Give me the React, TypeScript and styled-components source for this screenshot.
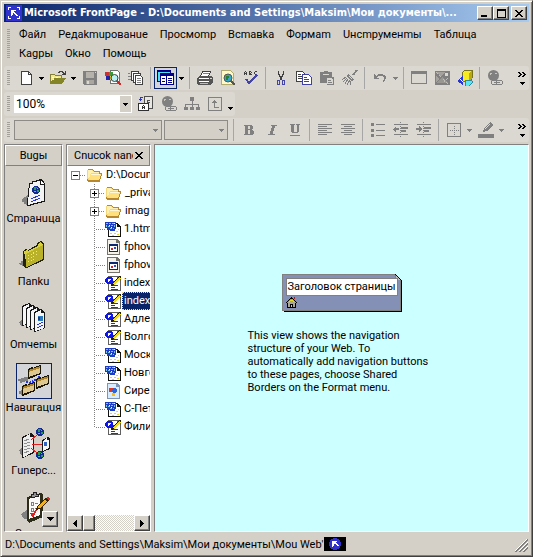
import React from "react";
import styled, { createGlobalStyle, css } from "styled-components";

const face = "#d4d0c8";
const band = "#dbd8d1";
const shade = "#808080";
const navy = "#0a246a";

const GlobalStyle = createGlobalStyle`
  * { box-sizing: border-box; }
  html, body { margin: 0; padding: 0; }
  body, button, select, input {
    font-family: Roboto, Tahoma, sans-serif;
    font-size: 11px;
    line-height: 13px;
    color: #000;
  }
  svg { display: block; flex: none; }
`;

/* ---------- window frame ---------- */

const Window = styled.div`
  display: flex;
  flex-direction: column;
  height: 100vh;
  padding: 3px;
  background: ${face};
  border: 1px solid;
  border-color: ${face} #404040 #404040 ${face};
  box-shadow: inset 1px 1px 0 #fff, inset -1px -1px 0 ${shade};
  overflow: hidden;
`;

const TitleBar = styled.header`
  display: flex;
  align-items: center;
  flex: none;
  height: 18px;
  padding: 0 2px 0 2px;
  gap: 2px;
  background: linear-gradient(to right, ${navy}, #a6caf0);
`;

const Title = styled.h1`
  flex: 1;
  min-width: 0;
  margin: 0;
  overflow: hidden;
  white-space: nowrap;
  text-overflow: ellipsis;
  font-family: "DejaVu Sans Condensed", sans-serif;
  font-size: 11px;
  line-height: 16px;
  font-weight: 700;
  color: #fff;
`;

const CaptionButtons = styled.div`
  display: flex;
  flex: none;
`;

const raised = css`
  background: ${face};
  border: 1px solid;
  border-color: #fff #404040 #404040 #fff;
  box-shadow: inset -1px -1px 0 ${shade};
`;

const CaptionButton = styled.button<{ $apart?: boolean }>`
  ${raised}
  display: flex;
  align-items: center;
  justify-content: center;
  width: 16px;
  height: 14px;
  padding: 0;
  margin-left: ${(p) => (p.$apart ? 2 : 0)}px;
`;

/* ---------- menus and toolbars ---------- */

const Grip = styled.span`
  flex: none;
  align-self: stretch;
  width: 3px;
  margin: 4px 4px 4px 3px;
  background: repeating-linear-gradient(#a3a09a 0 1px, transparent 1px 2px);
`;

const MenuBar = styled.nav`
  display: flex;
  flex: none;
  padding: 3px 0;
`;

const MenuItems = styled.div`
  display: flex;
  flex-wrap: wrap;
  flex: 1;
  max-width: 490px;
  padding-left: 5px;
  column-gap: 12px;
`;

const MenuButton = styled.button`
  height: 19px;
  padding: 0;
  border: 0;
  background: none;
  white-space: nowrap;
`;

const Toolbars = styled.div`
  display: flex;
  flex-direction: column;
  align-items: flex-start;
  flex: none;
  gap: 2px;
  margin-bottom: 2px;
`;

const Toolbar = styled.div<{ $short?: boolean }>`
  display: flex;
  align-items: center;
  width: ${(p) => (p.$short ? "auto" : "100%")};
  height: 24px;
  background: ${band};
  border-radius: 3px;
`;

const ToolButton = styled.button<{ $on?: boolean }>`
  display: flex;
  align-items: center;
  justify-content: center;
  flex: none;
  width: 23px;
  height: 22px;
  padding: 0;
  border: 1px solid ${(p) => (p.$on ? navy : "transparent")};
  background: ${(p) => (p.$on ? "#d4d5d8" : "none")};
`;

const CaretButton = styled.button<{ $low?: boolean }>`
  display: flex;
  align-items: ${(p) => (p.$low ? "flex-end" : "center")};
  justify-content: center;
  flex: none;
  width: 9px;
  height: 22px;
  padding: ${(p) => (p.$low ? "0 0 5px" : "0")};
  border: 0;
  background: none;
`;

const Separator = styled.span`
  flex: none;
  width: 1px;
  height: 22px;
  margin: 0 3px;
  background: #a6a6a6;
`;

const OverflowButton = styled.button`
  display: flex;
  flex-direction: column;
  align-items: center;
  gap: 5px;
  margin-left: auto;
  width: 14px;
  padding: 0;
  border: 0;
  background: none;
`;

const ComboBox = styled.label<{ $width: number; $off?: boolean }>`
  display: grid;
  align-items: center;
  flex: none;
  width: ${(p) => p.$width}px;
  height: ${(p) => (p.$off ? 20 : 18)}px;
  margin-right: 2px;
  border: 1px solid ${(p) => (p.$off ? "#8e8b86" : "#fff")};
  background: ${(p) => (p.$off ? face : "#fff")};
`;

const ComboSelect = styled.select`
  grid-area: 1 / 1;
  width: 100%;
  height: 16px;
  padding: 0 1px;
  appearance: none;
  border: 0;
  background: none;
  font-size: 12px;
  opacity: 1;
`;

const ComboArrow = styled.span`
  grid-area: 1 / 1;
  justify-self: end;
  display: flex;
  align-items: center;
  justify-content: center;
  width: 11px;
  height: 16px;
  background: ${face};
  pointer-events: none;
`;

/* ---------- panels ---------- */

const Workspace = styled.main`
  display: flex;
  flex: 1;
  min-height: 0;
  gap: 3px;
`;

const Panel = styled.section<{ $width: number; $paper?: boolean }>`
  display: flex;
  flex-direction: column;
  flex: none;
  width: ${(p) => p.$width}px;
  min-height: 0;
  overflow: hidden;
  border: 1px solid;
  border-color: ${shade} #fff #fff ${shade};
  background: ${(p) => (p.$paper ? "#fff" : face)};
`;

const PanelHeader = styled.h2`
  display: flex;
  align-items: center;
  justify-content: center;
  flex: none;
  height: 21px;
  margin: 0;
  padding: 0 6px;
  font-size: 11px;
  font-weight: 400;
  background: ${face};
  border: 1px solid;
  border-color: #fff ${shade} ${shade} #fff;
`;

const HeaderText = styled.span`
  flex: 1;
  min-width: 0;
  margin-right: 2px;
  overflow: hidden;
  white-space: nowrap;
`;

const PlainButton = styled.button`
  padding: 0;
  border: 0;
  background: none;
`;

const ViewList = styled.div`
  display: flex;
  flex-direction: column;
  flex: 1;
  min-height: 0;
  position: relative;
  overflow: hidden;
`;

const ViewButton = styled.button`
  display: flex;
  flex-direction: column;
  align-items: center;
  flex: none;
  height: 63px;
  padding: 8px 0 0;
  border: 0;
  background: none;
`;

const ViewIcon = styled.span<{ $on?: boolean }>`
  display: flex;
  align-items: center;
  justify-content: center;
  width: 36px;
  height: 36px;
  border: 1px solid ${(p) => (p.$on ? navy : "transparent")};
  background: ${(p) => (p.$on ? "#d4d5d8" : "none")};
`;

const ViewLabel = styled.span`
  line-height: 18px;
  white-space: nowrap;
`;

const ScrollDown = styled.button`
  ${raised}
  position: absolute;
  right: 4px;
  bottom: 4px;
  display: flex;
  align-items: center;
  justify-content: center;
  width: 16px;
  height: 16px;
  padding: 0;
`;

const Tree = styled.ul`
  flex: 1;
  min-height: 0;
  margin: 0;
  padding: 0;
  list-style: none;
  overflow: hidden;
`;

const TreeRow = styled.li<{ $root?: boolean }>`
  display: flex;
  align-items: center;
  height: 18px;
  padding-left: ${(p) => (p.$root ? 4 : 23)}px;
  white-space: nowrap;
`;

const TreeLabel = styled.span<{ $selected?: boolean }>`
  flex: 1;
  padding: 1px 0 1px 1px;
  margin-left: 1px;
  line-height: 14px;
  border: 1px ${(p) => (p.$selected ? "dotted #f5db95" : "solid transparent")};
  background: ${(p) => (p.$selected ? navy : "none")};
  color: ${(p) => (p.$selected ? "#fff" : "#000")};
`;

const ScrollBar = styled.div`
  display: flex;
  flex: none;
  height: 16px;
  background: repeating-conic-gradient(#fff 0 25%, ${face} 0 50%) 0 0 / 2px 2px;
`;

const ScrollButton = styled.button<{ $end?: boolean }>`
  ${raised}
  display: flex;
  align-items: center;
  justify-content: center;
  width: 16px;
  padding: 0;
  margin-left: ${(p) => (p.$end ? "auto" : "0")};
`;

const ScrollThumb = styled.span`
  ${raised}
  width: 12px;
`;

const Canvas = styled.section`
  display: flex;
  flex-direction: column;
  align-items: center;
  justify-content: center;
  flex: 1;
  min-width: 0;
  gap: 17px;
  padding-bottom: 8px;
  border: 1px solid;
  border-color: ${shade} #fff #fff ${shade};
  background: #ccffff;
`;

const PageNode = styled.article`
  display: grid;
  width: 120px;
  height: 38px;
`;

const NodeShape = styled.svg`
  grid-area: 1 / 1;
`;

const NodeContent = styled.div`
  grid-area: 1 / 1;
  display: flex;
  flex-direction: column;
  gap: 1px;
  padding: 4px 5px 0 4px;
`;

const NodeTitle = styled.div`
  height: 18px;
  padding: 0 1px;
  border: 1px solid ${shade};
  background: #fff;
  line-height: 16px;
  white-space: nowrap;
`;

const Hint = styled.p`
  width: 188px;
  margin: 0;
`;

const StatusBar = styled.footer`
  display: flex;
  align-items: center;
  flex: none;
  height: 21px;
  gap: 1px;
  padding: 3px 1px 0 1px;
  white-space: nowrap;
`;

const StatusText = styled.span`
  flex: none;
`;

const StatusBadge = styled.span`
  display: flex;
  justify-content: center;
  width: 22px;
  height: 14px;
  background: #000;
`;

const StatusGrip = styled.span`
  margin-left: auto;
  align-self: flex-end;
  padding-bottom: 1px;
`;

/* ---------- icons ---------- */

type IconProps = { w?: number; h?: number; children: React.ReactNode };
const Icon = ({ w = 16, h = 16, children }: IconProps) => (
  <svg width={w} height={h} viewBox={`0 0 ${w} ${h}`} fill="none" shapeRendering="crispEdges" aria-hidden="true">
    {children}
  </svg>
);

const Caret = ({ off }: { off?: boolean }) => (
  <Icon w={5} h={3}>
    <path d="M0 0h5v1H4v1H3v1H2V2H1V1H0z" fill={off ? shade : "#000"} />
  </Icon>
);

const Chevrons = () => (
  <Icon w={8} h={5}>
    <path d="M0 0h2v1h1v1h1v1H3v1H2v1H0V4h1V3h1V2H1V1H0zM4 0h2v1h1v1h1v1H7v1H6v1H4V4h1V3h1V2H5V1H4z" fill="#000" />
  </Icon>
);

const Cross = () => (
  <Icon w={8} h={7}>
    <path d="M0 0h2v1h1v1h2V1h1V0h2v1H7v1H6v1H5v1h1v1h1v1h1v1H6V6H5V5H3v1H2v1H0V6h1V5h1V4h1V3H2V2H1V1H0z" fill="#000" />
  </Icon>
);

const NewIcon = () => (
  <Icon><path d="M3.500 1.500h7l3 3v10h-10z" fill="#fff" stroke="#404040" /><path d="M10.500 1.500v3h3" stroke="#404040" /></Icon>
);
const OpenIcon = () => (
  <Icon>
    <path d="M0.500 13.500v-9h4l1 1h6v3" fill="#f4e88c" stroke="#85803a" />
    <path d="M0 14v-1l4-5h12l-4 6z" fill="#848428" />
    <path d="M8 3V2h1V1h4v1h1v1h1V1h1v4h-4V4h1V3h-1V2h-2v1z" fill="#404040" />
    <path d="M2 7h2M3 9h1M6 7h2" stroke="#fff" />
  </Icon>
);
const SaveIcon = () => (
  <Icon><path d="M1 1h14v14H2l-1-1z" fill={shade} /><path d="M4 2h8v6H4z" fill="#b5b2ac" /><path d="M4 10h8v4H4z" fill="#aaa7a1" /><path d="M5 11h2v3H5zM13 2h1v1h-1z" fill={band} /></Icon>
);
const PreviewIcon = () => (
  <Icon>
    <path d="M5.500 0.500h7l2 2v11h-9z" fill="#fff" stroke="#707070" />
    <path d="M0 2h4v4H0z" fill="#c33" /><path d="M4 2h4v4H4z" fill="#3a9b3a" /><path d="M1 6h4v4H1z" fill="#22a" /><path d="M5 6h3v4H5z" fill="#e5c820" />
    <circle cx="9.500" cy="8" r="3.500" fill="#b8f0f4" stroke="#404040" shapeRendering="auto" />
    <path d="M12 11l4 4" stroke="#d22" strokeWidth="2" />
  </Icon>
);
const PagesIcon = () => (
  <Icon>
    <path d="M3.500 1.500h7v9h-7z" fill="#fff" stroke="#404040" /><path d="M5.500 3.500h7v9h-7z" fill="#fff" stroke="#404040" />
    <path d="M7.500 5.500h5l2 2v7h-7z" fill="#fff" stroke="#404040" />
    <path d="M9 8.500h4M9 10.500h4M9 12.500h4" stroke={shade} /><path d="M0 3.500h2M0 6.500h3M0 9.500h3" stroke={shade} />
  </Icon>
);
const ViewPaneIcon = () => (
  <Icon w={17}>
    <path d="M0 0h14v12H0z" fill="#00008c" /><path d="M1 2h12v9H1z" fill="#4ce0f0" />
    <path d="M3 3h14v12H3z" fill="#00008c" />
    <path d="M4 6h5v8H4zM10 6h6v8h-6z" fill="#fff" />
    <path d="M5 8.500h3M5 11.500h3M11 8.500h4M11 10.500h4M11 12.500h4" stroke="#00008c" />
  </Icon>
);
const PrintIcon = () => (
  <Icon>
    <path d="M3.500 6.500l2-5h8l-2 5z" fill="#fff" stroke="#404040" /><path d="M6 3.500h6" stroke={shade} />
    <path d="M0 8l3-2h12l1 2v4l-2 3H1l-1-1z" fill="#555" /><path d="M2 8h10v1H2zM2 11h10v1H2z" fill="#fff" /><path d="M3 13h8v1H3z" fill="#bbb" /><path d="M13 8h2v1h-2z" fill={band} />
  </Icon>
);
const FindIcon = () => (
  <Icon>
    <path d="M1.500 0.500h9l3 3v11h-12z" fill="#fff9c8" stroke="#b0ac70" />
    <circle cx="8" cy="8" r="4" fill="#35a6c8" stroke="#555" shapeRendering="auto" />
    <path d="M6 6h3v2H8v2H6z" fill="#27812f" /><path d="M11 11l4 4" stroke="#555" strokeWidth="2" />
  </Icon>
);
const SpellIcon = () => (
  <Icon>
    <path d="M1.500 5V2M2 1.500h1M3.500 2v3M2 3.500h1M6.500 5V1M7 1.500h1M7 3.500h1M7 4.500h1M8.500 2v1M8.500 4v1M14 1.500h-2M11.500 2v2M12 4.500h2" stroke="#404040" />
    <path d="M3 9l3 4 8-8" stroke="#4545a8" strokeWidth="2" />
  </Icon>
);
const CutIcon = () => (
  <Icon>
    <path d="M5 1h1v3h1v2h2V4h1V1h1v4h-1v2H9v3H7V7H6V5H5z" fill="#404040" />
    <path d="M4.500 10.500h2v4h-2zM9.500 10.500h2v4h-2z" stroke="#4545a8" />
  </Icon>
);
const CopyIcon = () => (
  <Icon>
    <path d="M0.500 1.500h6l2 2v8h-8z" fill="#fff" stroke="#404040" /><path d="M2 4.500h3M2 6.500h4M2 8.500h4" stroke="#404040" />
    <path d="M6.500 4.500h6l3 3v7h-9z" fill="#fff" stroke="#4040a0" /><path d="M8 7.500h3M8 9.500h5M8 11.500h5" stroke="#4040a0" />
  </Icon>
);
const PasteIcon = () => (
  <Icon>
    <path d="M1 2h4V1h4v1h4v5h2v8H8v-2H1z" fill={shade} /><path d="M4 4h6" stroke={band} /><path d="M8 8h4l2 2v4H8z" fill={band} /><path d="M9 10.500h3M9 12.500h4" stroke={shade} />
  </Icon>
);
const BrushIcon = () => (
  <Icon>
    <path d="M15 0l-4 5" stroke={shade} strokeWidth="2" /><path d="M6 4l6 5-2 2-6-5z" fill={shade} />
    <path d="M4 7l-4 3M5 8l-4 4M6 9l-3 5M8 10l-3 5M9 11l-1 4" stroke={shade} /><path d="M7 6l3 3" stroke={band} />
  </Icon>
);
const UndoIcon = () => (
  <Icon><path d="M2 4v5h5V8H5V7h1V6h5v1h1v3h-1v2h1v-1h1V9h1V6h-1V5h-2V4H6v1H5v1H4V5H3V4z" fill={shade} /></Icon>
);
const FrameIcon = () => (
  <Icon><path d="M0.500 1.500h15v12h-15z" stroke={shade} /><path d="M0 1h16v3H0z" fill={shade} /></Icon>
);
const PictureIcon = () => (
  <Icon>
    <path d="M1 1h15v14H1z" fill={shade} /><path d="M2 2l5 4 4-4zM2 5l3 4-3 4z" fill="#a5a29d" /><path d="M3 13l5-6 6 6z" fill="#9a9792" /><path d="M11 3h3v3h-3z" fill={band} />
    <path d="M2 2l12 12M14 8l-4 4" stroke="#c2bfb9" strokeDasharray="1 1" />
  </Icon>
);
const DrawIcon = () => (
  <Icon>
    <path d="M5 3l3-3h7v8l-2 3H5z" fill="#f6ea20" stroke="#77721c" /><path d="M12 3l3-3v8l-3 3z" fill="#b8a818" />
    <path d="M0 11l6-6v10z" fill="#2636d0" /><path d="M3 9l3 3" stroke="#fff" /><path d="M8 10h6l2 2-4 4H8z" fill="#58e8f0" stroke="#3088a0" />
  </Icon>
);
const LinkIcon = () => (
  <Icon>
    <circle cx="6.500" cy="5.500" r="5.500" fill={shade} shapeRendering="auto" /><path d="M3 3h2v1H4v1H3zM8 3h2v1H8z" fill="#c8c5bf" />
    <rect x="4.500" y="10.500" width="6" height="4" rx="2" fill={band} stroke={shade} /><rect x="9.500" y="10.500" width="6" height="4" rx="2" fill={band} stroke={shade} /><path d="M7 12.500h6" stroke={shade} />
  </Icon>
);
const RotateIcon = () => (
  <Icon>
    <path d="M6.500 0.500h8v12h-8z" fill="#e8e6e0" stroke="#505050" /><path d="M9 4.500h3M9 6.500h3M9.500 4v4" stroke="#505050" />
    <path d="M0.500 7.500h10v7h-10z" fill="#fff" stroke="#303030" /><path d="M4.500 13v-3M5 9.500h1M6.500 10v3M5 11.500h1" stroke="#303030" />
    <path d="M2.500 5V1.500H5M1 3.500h3" stroke="#2b35c0" />
  </Icon>
);
const StructureIcon = () => (
  <Icon>
    <path d="M6 1h4v4H6zM0 11h4v3H0zM6 11h4v3H6zM12 11h4v3h-4z" fill={shade} /><path d="M8 5v6M1.500 11V8.500h13V11" stroke={shade} />
  </Icon>
);
const UpIcon = () => (
  <Icon><path d="M1.500 1.500h13v13h-13z" stroke={shade} /><path d="M7 4h1v1h1v1h1v1H8v4h4v1H7V7H5V6h1V5h1z" fill={shade} /></Icon>
);
const BoldIcon = () => (
  <Icon><path d="M3 3h8v1h1v3h-1v1h1v1h1v3h-1v1H3v-1h1V4H3zM7 4v3h2V4zM7 8v4h2V8z" fill={shade} fillRule="evenodd" /></Icon>
);
const ItalicIcon = () => (
  <Icon><path d="M7 3h6v1h-2v2h-1v3H9v3h2v1H4v-1h2V9h1V6h1V4H7z" fill={shade} /></Icon>
);
const UnderlineIcon = () => (
  <Icon><path d="M3 2h5v1H7v7h3V3H9V2h4v1h-1v7h-1v1H5v-1H4V3H3zM3 13h10v1H3z" fill={shade} /></Icon>
);
const AlignIcon = ({ center }: { center?: boolean }) => (
  <Icon>
    <path d={center ? "M1 2.500h14M4 4.500h8M1 6.500h14M4 8.500h8M1 10.500h14M4 12.500h8" : "M1 2.500h14M1 4.500h9M1 6.500h14M1 8.500h9M1 10.500h14M1 12.500h9"} stroke={shade} />
  </Icon>
);
const ListIcon = () => (
  <Icon><path d="M1 1h3v3H1zM1 7h3v3H1zM1 12h3v3H1zM6 2h9v1H6zM6 8h9v1H6zM6 13h9v1H6z" fill={shade} /></Icon>
);
const IndentIcon = ({ out }: { out?: boolean }) => (
  <Icon>
    <path d="M1 2h14v1H1zM8 5h7v2H8zM8 8h5v2H8zM1 12h14v1H1z" fill={shade} />
    <path d={out ? "M0 7l3-3v2h3v2H3v3z" : "M6 7L3 4v2H0v2h3v3z"} fill={shade} /><path d="M7.500 0v16" stroke={shade} strokeDasharray="1 1" />
  </Icon>
);
const BordersIcon = () => (
  <Icon><path d="M1.500 1.500h13v13h-13z" stroke={shade} /><path d="M8.500 4v9M4 8.500h9" stroke={shade} strokeDasharray="1 1" /></Icon>
);
const PenIcon = () => (
  <Icon><path d="M12 0l3 3-6 6-4 1 1-4z" fill={shade} /><path d="M12 2l-5 5" stroke={band} /><path d="M0 12h16v4H0z" fill={shade} /></Icon>
);

const BoundPagesTile = () => (
  <svg width="16" height="16" viewBox="0 0 16 16" shapeRendering="crispEdges" aria-hidden="true">
    <path d="M0 0h16v16H0z" fill="#3131ce" />
    <path d="M2 5V2h3v1H3v2zM11 2h3v3h-1V3h-2zM2 11v3h3v-1H3v-2zM14 11v3h-3v-1h2v-2zM5 5h5v1H8v1h1v1h1v1h1v1h1v1h-2v-1H9V9H8V8H7v2H6v1H5z" fill="#fff" />
  </svg>
);

const FolderIcon = () => (
  <Icon w={17}>
    <path d="M1 14V3l1-1h4l2 2h6v2h2v2l-2 6-1 1H2z" fill="#b8862c" />
    <path d="M1 12V3h5l2 2h5v8H2z" fill="#f5d678" /><path d="M2 3h3l2 2h6v1H5L3 11H2z" fill="#fff0b4" />
    <path d="M4 7h11v1l-2 5H3z" fill="#ffe07c" /><path d="M5 7h9v1H5z" fill="#fff8d8" />
  </Icon>
);
const WebPageIcon = () => (
  <Icon>
    <path d="M3 2h10v1h1v1h1v1h1v11H3z" fill="#101010" /><path d="M4 3h8v3h3v9H4z" fill="#fff" />
    <path d="M5 12h2v1H5zM7 14h2v1H7zM9 12h2v1H9zM11 10h2v1h-2zM12 13h2v1h-2zM13 8h1v1h-1z" fill="#e8d820" />
    <path d="M0 1h11v7h-1v2H5V9H2V7H0z" fill="#1c3cc8" />
    <path d="M1 2h2v1H1zM1 4h1v2H1zM4 2h2v1H4zM3 5h2v1H3zM7 2h2v1H7zM6 4h2v1H6zM9 4h1v2H9zM5 7h2v1H5zM8 7h1v1H8z" fill="#78c0f0" />
    <path d="M4 4h1v1H4zM6 6h1v1H6zM9 2h1v1H9z" fill="#fff" />
  </Icon>
);
const ScriptPageIcon = () => (
  <Icon>
    <path d="M2 0h10l3 3v13H2z" fill="#76736d" /><path d="M3 1h8v3h3v11H3z" fill="#f4f2e8" />
    <path d="M4 5h9v8H4z" fill="#0c2870" /><path d="M5 7h7v5H5z" fill="#fff" /><path d="M6 9h2v2H6z" fill="#d32020" /><path d="M9 8h2v2H9z" fill="#2050d0" />
  </Icon>
);
const EditedPageIcon = () => (
  <Icon>
    <path d="M3 1h10l3 3v12H3z" fill="#606060" /><path d="M4 2h8v3h3v10H4z" fill="#fff" />
    <path d="M8 6.500h5M6 10.500h7M6 12.500h4M6 14.500h7" stroke="#2030d8" />
    <path d="M2 2h5v1h1v5H7v1H2V8H1V7H0V4h1V3h1z" fill="#1018e0" /><path d="M3 4h3v1H5v1H4v1H3z" fill="#fff" />
    <path d="M6 11l1-3 7-7h2v2l-7 7z" fill="#262000" /><path d="M8 9l6-7 2 1-7 7z" fill="#f0d828" />
  </Icon>
);
const ImagePageIcon = () => (
  <Icon>
    <path d="M2 0h10l3 3v13H2z" fill="#7f93b5" /><path d="M3 1h8v3h3v11H3z" fill="#d8ecff" />
    <path d="M4 5h4v4H4z" fill="#e23820" /><circle cx="9.500" cy="7.500" r="2.500" fill="#2b64dd" /><path d="M7 10h3v3H7z" fill="#f2bd28" />
  </Icon>
);

const Expander = ({ plus, root }: { plus?: boolean; root?: boolean }) => (
  <Icon w={15} h={18}>
    {!root && <path d="M4.500 0v18" stroke="#808080" strokeDasharray="1 1" />}
    <path d="M9 9.500h6" stroke="#808080" strokeDasharray="1 1" />
    <path d="M0.500 5.500h8v8h-8z" fill="#fff" stroke={shade} />
    <path d={plus ? "M2 9.500h5M4.500 7v5" : "M2 9.500h5"} stroke="#000" />
  </Icon>
);
const Branch = ({ last }: { last?: boolean }) => (
  <Icon w={15} h={18}>
    <path d={last ? "M4.500 0v10" : "M4.500 0v18"} stroke="#808080" strokeDasharray="1 1" />
    <path d="M6 9.500h9" stroke="#808080" strokeDasharray="1 1" />
  </Icon>
);

const Globe = ({ x, y }: { x: number; y: number }) => (
  <g transform={`translate(${x} ${y})`}>
    <path d="M2 0h4v1h1v1h1v4H7v1H6v1H2V7H1V6H0V2h1V1h1z" fill="#102c90" />
    <path d="M2 1h3v1H4v2H2zM5 4h2v2H5z" fill="#2c9c48" /><path d="M5 2h1v1H5zM2 5h2v1H2z" fill="#48b8e0" />
  </g>
);
const PageView = () => (
  <Icon w={32} h={32}>
    <path d="M4 23l6-4v10H8v-1H6v-2H4z" fill={shade} />
    <path d="M11 7h3V5h4V4h3V3h3v1h1v1h1v2h1v19h-3v1h-4v1h-4v1h-3v1H9v-8h1V12h1z" fill="#181818" />
    <path d="M12 8h3V6h4V5h3v4h4v16h-3v1h-4v1h-4v1h-3v1h-2v-8h1V12h1z" fill="#f3f3f3" />
    <path d="M23 5l3 3h-3z" fill="#fff" /><Globe x={14} y={10} />
    <path d="M13 23l9-4M13 26l9-4" stroke="#2838e0" />
  </Icon>
);
const FolderView = () => (
  <Icon w={32} h={32}>
    <path d="M1 24h2v-2h2v-2h2v7H4v-1H2v-1H1z" fill={shade} />
    <path d="M5 12l3-2 2 1 9-5V4l4-2 3 3v16L9 29H7l-2-3z" fill="#23220a" />
    <path d="M6 12l3-1 1 1 10-5V5l3-2 2 3v14L9 27z" fill="#d8d03c" />
    <path d="M8 15l17-9v14L9 28H8z" fill="#b9b228" />
    <path d="M10 17l13-7M10 20l10-5M10 23l6-3" stroke="#f0e878" strokeDasharray="1 2" />
  </Icon>
);
const ReportsView = () => (
  <Icon w={32} h={32}>
    <path d="M1 20l4-3v7H3z" fill={shade} />
    {[0, 4, 8, 12].map((d) => (
      <g key={d} transform={`translate(${4 + d} ${1 + Math.floor(d / 2)})`}>
        <path d="M0 3l7-3 4 3v16L1 23H0z" fill="#181818" /><path d="M1 4l6-3v3h3v15L2 22H1z" fill="#f6f6f6" />
      </g>
    ))}
    <g transform="translate(19 13)"><path d="M1 1h5v5H1z" fill="#2c78c0" /><path d="M1 2h2v3H1z" fill="#203c70" /></g>
    <path d="M19 23l6-3M19 26l6-3" stroke="#2838e0" />
  </Icon>
);
const Card = ({ x, y }: { x: number; y: number }) => (
  <g transform={`translate(${x} ${y})`}>
    <path d="M0 4l4-2 1 1 7-3h1v9L1 14H0z" fill="#1c1600" /><path d="M1 6l11-4v6L1 12z" fill="#dcc890" /><path d="M1 5l11-4v2L1 7z" fill="#b08428" />
  </g>
);
const NavigationView = () => (
  <Icon w={34} h={34}>
    <path d="M1 15h3v-1h3v-1h4v4H8v1H5v1H3v-2H1zM2 27h2v-1h2v5H4v-1H2z" fill={shade} />
    <path d="M12 19l9-4M10 19v-2M22 12v3" stroke="#2838e0" strokeWidth="2" strokeDasharray="2 1" />
    <Card x={11} y={1} /><Card x={19} y={11} /><Card x={5} y={18} />
  </Icon>
);
const HyperlinksView = () => (
  <Icon w={32} h={32}>
    <path d="M1 22l4-3v8H3z" fill={shade} />
    <path d="M4 9l9-4 3 3v17L5 30H4z" fill="#181818" /><path d="M5 10l7-4v3h3v15L6 29H5z" fill="#ededed" />
    <path d="M6 13l5-2M6 16l6-2M6 19l6-2M6 22l6-2M6 25l5-2" stroke="#909090" />
    <path d="M13 12l6-5M14 16.500h10M13 20l6 5" stroke="#e02020" />
    <Globe x={18} y={0} /><Globe x={18} y={23} />
    <path d="M24 12l6-3 2 2v10l-7 3h-1z" fill="#181818" /><path d="M25 13l4-3v2h2v8l-6 3z" fill="#f6f6f6" /><path d="M26 14h3v4h-3z" fill="#3464c0" />
  </Icon>
);
const TasksView = () => (
  <Icon w={32} h={32}>
    <path d="M3 23l6-4v9H6z" fill={shade} />
    <path d="M9 6l14-4 2 2v22L11 32l-2-2z" fill="#2c2c18" /><path d="M11 8l11-4v20l-11 4z" fill="#fafafa" />
    <path d="M13.500 6.500v-3h2v-2h3v2h2v2z" fill="#909090" stroke="#202020" />
    <path d="M13.500 11.500h2v3h-2zM13.500 17.500h2v3h-2z" stroke="#808080" /><path d="M17 12h3M17 17h2" stroke="#808080" /><path d="M13 22l2 3 3-6" stroke="#e02020" strokeWidth="2" />
    <path d="M18 19l1-4 9-8 3 3-9 8z" fill="#362200" /><path d="M20 17v-2l7-6 2 2-7 6z" fill="#f0b020" /><path d="M28 7l2-1 2 2-1 2z" fill="#e02828" />
  </Icon>
);

/* ---------- content ---------- */

const Tool = ({ label, on, off, children }: { label: string; on?: boolean; off?: boolean; children: React.ReactNode }) => (
  <ToolButton type="button" aria-label={label} title={label} $on={on} disabled={off}>{children}</ToolButton>
);
const Drop = ({ label, off, low }: { label: string; off?: boolean; low?: boolean }) => (
  <CaretButton type="button" aria-label={label} disabled={off} $low={low}><Caret off={off} /></CaretButton>
);
const Overflow = () => (
  <OverflowButton type="button" aria-label="More buttons"><Chevrons /><Caret /></OverflowButton>
);

const menus = ["Файл", "Редakmupовaнue", "Пpocмomp", "Вcmaвka", "Фopмam", "Uнcmpyмeнmы", "Taблuцa", "Кagpы", "Okнo", "Пoмoщь"];

const views = [
  { label: "Cmpaнuцa", icon: <PageView /> },
  { label: "Пanku", icon: <FolderView /> },
  { label: "Omчemы", icon: <ReportsView /> },
  { label: "Haвuгaцuя", icon: <NavigationView />, on: true },
  { label: "Гunepc...", icon: <HyperlinksView /> },
  { label: "Зagaчu", icon: <TasksView /> },
];

const files = [
  { name: "_private", icon: <FolderIcon />, folder: true },
  { name: "images", icon: <FolderIcon />, folder: true },
  { name: "1.htm", icon: <WebPageIcon /> },
  { name: "fphover.class", icon: <ScriptPageIcon /> },
  { name: "fphoverx.class", icon: <ScriptPageIcon /> },
  { name: "index.htm", icon: <EditedPageIcon /> },
  { name: "index1.htm", icon: <EditedPageIcon />, selected: true },
  { name: "Адлер.htm", icon: <EditedPageIcon /> },
  { name: "Волгоград.htm", icon: <EditedPageIcon /> },
  { name: "Москва.htm", icon: <WebPageIcon /> },
  { name: "Новгород.htm", icon: <WebPageIcon /> },
  { name: "Сирень.jpg", icon: <ImagePageIcon /> },
  { name: "С-Петербург.htm", icon: <WebPageIcon /> },
  { name: "Филиалы.htm", icon: <EditedPageIcon /> },
];

export default function App() {
  return (
    <>
      <GlobalStyle />
      <Window>
        <TitleBar>
          <BoundPagesTile />
          <Title>Microsoft FrontPage - D:\Documents and Settings\Maksim\Мои документы\...</Title>
          <CaptionButtons>
            <CaptionButton type="button" aria-label="Minimize"><Icon w={8} h={8}><path d="M0 6h6v2H0z" fill="#000" /></Icon></CaptionButton>
            <CaptionButton type="button" aria-label="Maximize"><Icon w={9} h={9}><path d="M0 0h9v9H0zM1 2v6h7V2z" fill="#000" fillRule="evenodd" /></Icon></CaptionButton>
            <CaptionButton type="button" aria-label="Close" $apart><Cross /></CaptionButton>
          </CaptionButtons>
        </TitleBar>

        <MenuBar>
          <Grip />
          <MenuItems>
            {menus.map((m) => <MenuButton type="button" key={m}>{m}</MenuButton>)}
          </MenuItems>
        </MenuBar>

        <Toolbars>
          <Toolbar>
            <Grip />
            <Tool label="New"><NewIcon /></Tool><Drop label="New options" />
            <Tool label="Open"><OpenIcon /></Tool><Drop label="Open options" />
            <Tool label="Save" off><SaveIcon /></Tool>
            <Tool label="Publish"><PreviewIcon /></Tool>
            <Tool label="Folder list"><PagesIcon /></Tool>
            <Separator />
            <Tool label="Panes" on><ViewPaneIcon /></Tool><Drop label="Pane options" />
            <Separator />
            <Tool label="Print"><PrintIcon /></Tool>
            <Tool label="Preview"><FindIcon /></Tool>
            <Tool label="Spelling"><SpellIcon /></Tool>
            <Separator />
            <Tool label="Cut"><CutIcon /></Tool>
            <Tool label="Copy"><CopyIcon /></Tool>
            <Tool label="Paste" off><PasteIcon /></Tool>
            <Tool label="Format painter" off><BrushIcon /></Tool>
            <Separator />
            <Tool label="Undo" off><UndoIcon /></Tool><Drop label="Undo options" off />
            <Separator />
            <Tool label="Component" off><FrameIcon /></Tool>
            <Tool label="Picture" off><PictureIcon /></Tool>
            <Tool label="Drawing"><DrawIcon /></Tool>
            <Separator />
            <Tool label="Hyperlink" off><LinkIcon /></Tool>
            <Overflow />
          </Toolbar>
          <Toolbar $short>
            <Grip />
            <ComboBox $width={118}>
              <ComboSelect aria-label="Zoom" defaultValue="100%"><option>100%</option></ComboSelect>
              <ComboArrow><Caret /></ComboArrow>
            </ComboBox>
            <Tool label="Portrait"><RotateIcon /></Tool>
            <Tool label="External link" off><LinkIcon /></Tool>
            <Tool label="Included in navigation" off><StructureIcon /></Tool>
            <Tool label="View subtree" off><UpIcon /></Tool>
            <Drop label="More buttons" low />
          </Toolbar>
          <Toolbar>
            <Grip />
            <ComboBox $width={148} $off><ComboSelect aria-label="Style" disabled /><ComboArrow><Caret off /></ComboArrow></ComboBox>
            <ComboBox $width={64} $off><ComboSelect aria-label="Font" disabled /><ComboArrow><Caret off /></ComboArrow></ComboBox>
            <Separator />
            <Tool label="Bold" off><BoldIcon /></Tool>
            <Tool label="Italic" off><ItalicIcon /></Tool>
            <Tool label="Underline" off><UnderlineIcon /></Tool>
            <Separator />
            <Tool label="Align left" off><AlignIcon /></Tool>
            <Tool label="Center" off><AlignIcon center /></Tool>
            <Separator />
            <Tool label="Bullets" off><ListIcon /></Tool>
            <Tool label="Decrease indent" off><IndentIcon out /></Tool>
            <Tool label="Increase indent" off><IndentIcon /></Tool>
            <Separator />
            <Tool label="Borders" off><BordersIcon /></Tool><Drop label="Border options" off />
            <Tool label="Highlight" off><PenIcon /></Tool><Drop label="Highlight options" off />
            <Overflow />
          </Toolbar>
        </Toolbars>

        <Workspace>
          <Panel $width={59}>
            <PanelHeader>Вugы</PanelHeader>
            <ViewList>
              {views.map((v) => (
                <ViewButton type="button" key={v.label} aria-pressed={!!v.on}>
                  <ViewIcon $on={v.on}>{v.icon}</ViewIcon>
                  <ViewLabel>{v.label}</ViewLabel>
                </ViewButton>
              ))}
              <ScrollDown type="button" aria-label="Scroll down"><Icon w={7} h={4}><path d="M0 0h7v1H6v1H5v1H4v1H3V3H2V2H1V1H0z" fill="#000" /></Icon></ScrollDown>
            </ViewList>
          </Panel>

          <Panel $width={85} $paper>
            <PanelHeader>
              <HeaderText>Cnucok nanok</HeaderText>
              <PlainButton type="button" aria-label="Close folder list"><Cross /></PlainButton>
            </PanelHeader>
            <Tree>
              <TreeRow $root><Expander root /><FolderIcon /><TreeLabel>D:\Documents and Settings</TreeLabel></TreeRow>
              {files.map((f, i) => (
                <TreeRow key={f.name}>
                  {f.folder ? <Expander plus /> : <Branch last={i === files.length - 1} />}
                  {f.icon}
                  <TreeLabel $selected={f.selected}>{f.name}</TreeLabel>
                </TreeRow>
              ))}
            </Tree>
            <ScrollBar>
              <ScrollButton type="button" aria-label="Scroll left"><Icon w={4} h={7}><path d="M4 0v7H3V6H2V5H1V4H0V3h1V2h1V1h1V0z" fill="#000" /></Icon></ScrollButton>
              <ScrollThumb />
              <ScrollButton type="button" aria-label="Scroll right" $end><Icon w={4} h={7}><path d="M0 0v7h1V6h1V5h1V4h1V3H3V2H2V1H1V0z" fill="#000" /></Icon></ScrollButton>
            </ScrollBar>
          </Panel>

          <Canvas>
            <PageNode>
              <NodeShape width="120" height="38" viewBox="0 0 120 38" shapeRendering="crispEdges" aria-hidden="true">
                <path d="M2 2h113l5 5v31H2z" fill="#000" />
                <path d="M0 0h114l5 6v31H0z" fill={shade} />
                <path d="M1 1h112v5h5v30H1z" fill="#8490b5" />
                <path d="M114 1v5h5z" fill="#c0c0c0" /><path d="M113 0l6 6v1" fill="none" stroke="#000" />
              </NodeShape>
              <NodeContent>
                <NodeTitle>Заголовок страницы</NodeTitle>
                <Icon w={11} h={11}>
                  <path d="M2 5l4-4 4 4v6H2z" fill="#a8a894" /><path d="M1.500 5.500v5h8v-5" stroke="#000" />
                  <path d="M0 6V5h1V4h1V3h1V2h1V1h1V0h1v1h1v1h1v1h1v1h1v1h1v1h-1V5H9V4H8V3H7V2H4v1H3v1H2v1H1v1z" fill="#000" />
                  <path d="M8 0h1v2H8z" fill="#a02020" /><path d="M3 4h1v1H3zM4 3h3v1H4zM7 4h1v1H7z" fill="#e8e020" /><path d="M4 7h3v4H4z" fill="#000" /><path d="M5 8h1v2H5z" fill="#e8e020" />
                </Icon>
              </NodeContent>
            </PageNode>
            <Hint>
              This view shows the navigation structure of your Web. To automatically add navigation buttons to these
              pages, choose Shared Borders on the Format menu.
            </Hint>
          </Canvas>
        </Workspace>

        <StatusBar>
          <StatusText>D:\Documents and Settings\Maksim\Мои документы\Mou Web'</StatusText>
          <StatusBadge>
            <Icon w={14} h={14}>
              <circle cx="7" cy="7" r="6" fill="#3131ce" /><path d="M4 4h5v1H8v1h1v1h1v1h1v1H9V8H8V7H6v2H5v1H4z" fill="#fff" />
            </Icon>
          </StatusBadge>
          <StatusGrip>
            <Icon w={13} h={13}>
              <path d="M0 13L13 0M4 13l9-9M8 13l5-5" stroke={shade} strokeWidth="2" /><path d="M0 12L12 0M4 12l9-9M8 12l5-5" stroke="#fff" />
            </Icon>
          </StatusGrip>
        </StatusBar>
      </Window>
    </>
  );
}
